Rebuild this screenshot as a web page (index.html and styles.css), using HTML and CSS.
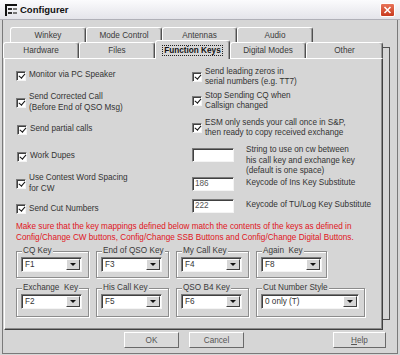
FILE: index.html
```html
<!DOCTYPE html>
<html lang="en">

<head>
  <meta charset="UTF-8" />
  <title>Configurer</title>
  <link rel="stylesheet" href="styles.css">
</head>

<body>
  <div class="window">
    <div class="titlebar">
      <svg class="app-icon" viewBox="0 0 12 12">
        <rect x="0" y="0" width="12" height="2" fill="#111" />
        <rect x="0" y="0" width="2" height="12" fill="#111" />
        <rect x="3" y="4" width="4" height="2" fill="#333" />
        <rect x="8" y="4" width="4" height="2" fill="#777" />
        <rect x="3" y="8" width="4" height="2" fill="#333" />
        <rect x="8" y="8" width="4" height="2" fill="#777" />
      </svg>
      <span class="title">Configurer</span>
      <div class="close">
        <svg viewBox="0 0 15 14">
          <path d="M4 3.5l7 7M11 3.5l-7 7" stroke="#fff" stroke-width="1.8" />
        </svg>
      </div>
    </div>

    <div class="client">
      <div class="tabctl">
        <div class="tab-row back">
          <div class="tab" style="width: 76px">Winkey</div>
          <div class="tab" style="width: 76px">Mode Control</div>
          <div class="tab" style="width: 75px">Antennas</div>
          <div class="tab" style="width: 76px">Audio</div>
        </div>
        <div class="tab-row front">
          <div class="tab" style="width: 76px">Hardware</div>
          <div class="tab" style="width: 76px">Files</div>
          <div class="tab sel" style="width: 75px"><span>Function Keys</span></div>
          <div class="tab" style="width: 76px">Digital Modes</div>
          <div class="tab" style="width: 77px">Other</div>
        </div>

        <div class="panel">
          <div class="options">
            <div class="col left">
              <label class="check"><i class="cb"></i>Monitor via PC Speaker</label>
              <label class="check"><i class="cb"></i>Send Corrected Call<br>(Before End of QSO Msg)</label>
              <label class="check nudge"><i class="cb"></i>Send partial calls</label>
              <label class="check nudge"><i class="cb"></i>Work Dupes</label>
              <label class="check"><i class="cb"></i>Use Contest Word Spacing<br>for CW</label>
              <label class="check"><i class="cb"></i>Send Cut Numbers</label>
            </div>
            <div class="col right">
              <label class="check r1"><i class="cb"></i>Send leading zeros in<br>serial numbers (e.g. TT7)</label>
              <label class="check r2"><i class="cb"></i>Stop Sending CQ when<br>Callsign changed</label>
              <label class="check r3"><i class="cb"></i>ESM only sends your call once in S&amp;P,<br>then ready to copy received exchange</label>
              <div class="field multi">
                <div class="input"></div>
                <span>String to use on cw between<br>his call key and exchange key<br>(default is one space)</span>
              </div>
              <div class="field">
                <div class="input">186</div>
                <span>Keycode of Ins Key Substitute</span>
              </div>
              <div class="field r6">
                <div class="input">222</div>
                <span>Keycode of TU/Log Key Substitute</span>
              </div>
            </div>
          </div>

          <p class="note">Make sure that the key mappings defined below match the contents of the keys as defined in<br>Config/Change CW buttons, Config/Change SSB Buttons and Config/Change Digital Buttons.</p>

          <div class="groups">
            <fieldset class="group">
              <legend>CQ Key</legend>
              <div class="combo"><span class="val">F1</span><span class="arrow"></span></div>
            </fieldset>
            <fieldset class="group">
              <legend>End of QSO Key</legend>
              <div class="combo"><span class="val">F3</span><span class="arrow"></span></div>
            </fieldset>
            <fieldset class="group">
              <legend>My Call Key</legend>
              <div class="combo"><span class="val">F4</span><span class="arrow"></span></div>
            </fieldset>
            <fieldset class="group narrow">
              <legend>Again&nbsp; Key</legend>
              <div class="combo"><span class="val">F8</span><span class="arrow"></span></div>
            </fieldset>
            <fieldset class="group">
              <legend>Exchange&nbsp; Key</legend>
              <div class="combo"><span class="val">F2</span><span class="arrow"></span></div>
            </fieldset>
            <fieldset class="group">
              <legend>His Call Key</legend>
              <div class="combo"><span class="val">F5</span><span class="arrow"></span></div>
            </fieldset>
            <fieldset class="group">
              <legend>QSO B4 Key</legend>
              <div class="combo"><span class="val">F6</span><span class="arrow"></span></div>
            </fieldset>
            <fieldset class="group">
              <legend>Cut Number Style</legend>
              <div class="combo wide"><span class="val">0 only (T)</span><span class="arrow"></span></div>
            </fieldset>
          </div>
        </div>
      </div>

      <div class="buttons">
        <button class="btn">OK</button>
        <button class="btn">Cancel</button>
        <button class="btn help"><u>H</u>elp</button>
      </div>
    </div>
  </div>
</body>

</html>
```

FILE: styles.css
```css
* {
  box-sizing: border-box;
}

body {
  margin: 0;
  background: #d6d6d6;
  font-family: "Liberation Sans", Arial, sans-serif;
  font-size: 8.2px;
  color: #333;
}

.window {
  width: 400px;
  height: 355px;
}

/* title bar */
.titlebar {
  display: flex;
  align-items: center;
  height: 20px;
  padding: 0 5px;
  background: linear-gradient(#fbfbfd, #e4e4ea);
  border-bottom: 1px solid #b0b0b8;
}

.app-icon {
  width: 12px;
  height: 12px;
  margin-right: 3px;
}

.title {
  font-size: 9.5px;
  font-weight: bold;
  color: #111;
}

.close {
  display: flex;
  margin-left: auto;
  width: 15px;
  height: 14px;
  border: 1px solid #fff;
  border-radius: 2px;
  background: linear-gradient(#e8745a, #c83a1e);
}

.close svg {
  width: 100%;
  height: 100%;
}

/* client area */
.client {
  height: 334px;
  margin: 0 2px;
  padding-top: 7px;
  border: 1px solid #7a7a7a;
  border-top: none;
}

.tabctl {
  position: relative;
}

/* frame of the tab sheet behind */
.tabctl::after {
  content: "";
  position: absolute;
  left: 380px;
  top: 20px;
  width: 6px;
  height: 271px;
  border: 1px solid #505050;
  border-left: none;
}

.tab-row {
  display: flex;
}

.tab-row.back {
  height: 15px;
  padding-left: 7px;
}

.tab-row.front {
  height: 16px;
}

.tab {
  display: flex;
  align-items: center;
  justify-content: center;
  background: #d6d6d6;
  border: 1px solid;
  border-color: #fff #505050 transparent #fff;
  border-bottom: none;
  border-radius: 3px 3px 0 0;
  box-shadow: inset -1px 0 #9a9a9a;
  color: #3a3a3a;
  white-space: nowrap;
}

.tab.sel {
  position: relative;
  z-index: 1;
  height: 19px;
  margin-top: -2px;
  font-weight: bold;
  color: #111;
}

.tab.sel span {
  padding: 0 1px;
  outline: 1px dotted #222;
}

.panel {
  width: 379px;
  height: 272px;
  margin-left: 1px;
  border: 1px solid;
  border-color: #fff #404040 #404040 #fff;
  box-shadow: inset -1px -1px #8c8c8c;
}

/* options */
.options {
  display: grid;
  grid-template-columns: 176px auto;
  padding: 3px 0 0 11px;
}

.col {
  display: flex;
  flex-direction: column;
}

.check {
  display: flex;
  align-items: center;
  height: 27px;
  line-height: 10.5px;
  white-space: nowrap;
}

.left .check:last-child {
  height: 24px;
}

.check.nudge {
  padding-left: 1px;
}

.cb {
  position: relative;
  flex: none;
  width: 10px;
  height: 10px;
  margin-right: 3px;
  background: #fff;
  border: 1px solid;
  border-color: #7a7a7a #f4f4f4 #f4f4f4 #7a7a7a;
  box-shadow: inset 1px 1px #404040;
}

.cb::after {
  content: "";
  position: absolute;
  left: 2.5px;
  top: 0;
  width: 2.5px;
  height: 5px;
  border: solid #111;
  border-width: 0 1.6px 1.6px 0;
  transform: rotate(40deg);
}

.right .check {
  height: 20px;
  line-height: 10px;
}

.right .r1 {
  margin-top: 5px;
}

.right .r2 {
  margin-top: 4px;
}

.right .r3 {
  margin-top: 7px;
}

.field {
  display: flex;
  align-items: center;
  white-space: nowrap;
  line-height: 10.5px;
}

.field.multi {
  align-items: flex-start;
  margin-top: 7px;
}

.field.multi .input {
  margin-top: 3px;
}

.field.r6 {
  margin-top: 8px;
}

.input {
  flex: none;
  width: 42px;
  height: 14px;
  margin-right: 12px;
  padding-left: 2px;
  background: #fff;
  border: 1px solid;
  border-color: #7a7a7a #f4f4f4 #f4f4f4 #7a7a7a;
  box-shadow: inset 1px 1px #404040;
  line-height: 12px;
  color: #555;
}

.note {
  margin: 0;
  padding-left: 11px;
  line-height: 11px;
  color: #e0141c;
  white-space: nowrap;
}

/* key groups */
.groups {
  display: grid;
  grid-template-columns: 73px 73px 73px 109px;
  grid-template-rows: 32px 34px;
  column-gap: 7px;
  row-gap: 5px;
  margin-top: 3px;
  padding-left: 11px;
}

.group {
  min-width: 0;
  margin: 0;
  padding: 0 0 0 4px;
  border: 1px solid #8c8c8c;
  box-shadow: 1px 1px #fff, inset 1px 1px #fff;
}

.group.narrow {
  width: 71px;
}

.group legend {
  margin-left: 1px;
  padding: 0 1px;
  line-height: 10px;
  background: #d6d6d6;
  color: #3a3a3a;
  white-space: nowrap;
}

.combo {
  display: flex;
  align-items: center;
  width: 61px;
  height: 15px;
  margin-top: 1px;
  padding: 1px;
  background: #fff;
  border: 1px solid;
  border-color: #7a7a7a #f4f4f4 #f4f4f4 #7a7a7a;
  box-shadow: inset 1px 1px #404040;
}

.combo.wide {
  width: 98px;
}

.combo .val {
  flex: 1;
  padding-left: 2px;
  color: #333;
}

.combo .arrow {
  display: flex;
  align-items: center;
  justify-content: center;
  width: 14px;
  height: 11px;
  background: #d6d6d6;
  border: 1px solid;
  border-color: #fff #404040 #404040 #fff;
}

.combo .arrow::before {
  content: "";
  border-left: 3px solid transparent;
  border-right: 3px solid transparent;
  border-top: 3px solid #111;
}

/* dialog buttons */
.buttons {
  display: flex;
  gap: 10px;
  height: 16px;
  margin-top: 2px;
  padding: 0 11px 0 121px;
}

.btn {
  width: 55px;
  padding: 0;
  background: #dadada;
  border: 1px solid;
  border-color: #fff #6a6a6a #6a6a6a #fff;
  font-family: inherit;
  font-size: 8.2px;
  color: #555;
}

.btn.help {
  width: 53px;
  margin-left: auto;
}
```
